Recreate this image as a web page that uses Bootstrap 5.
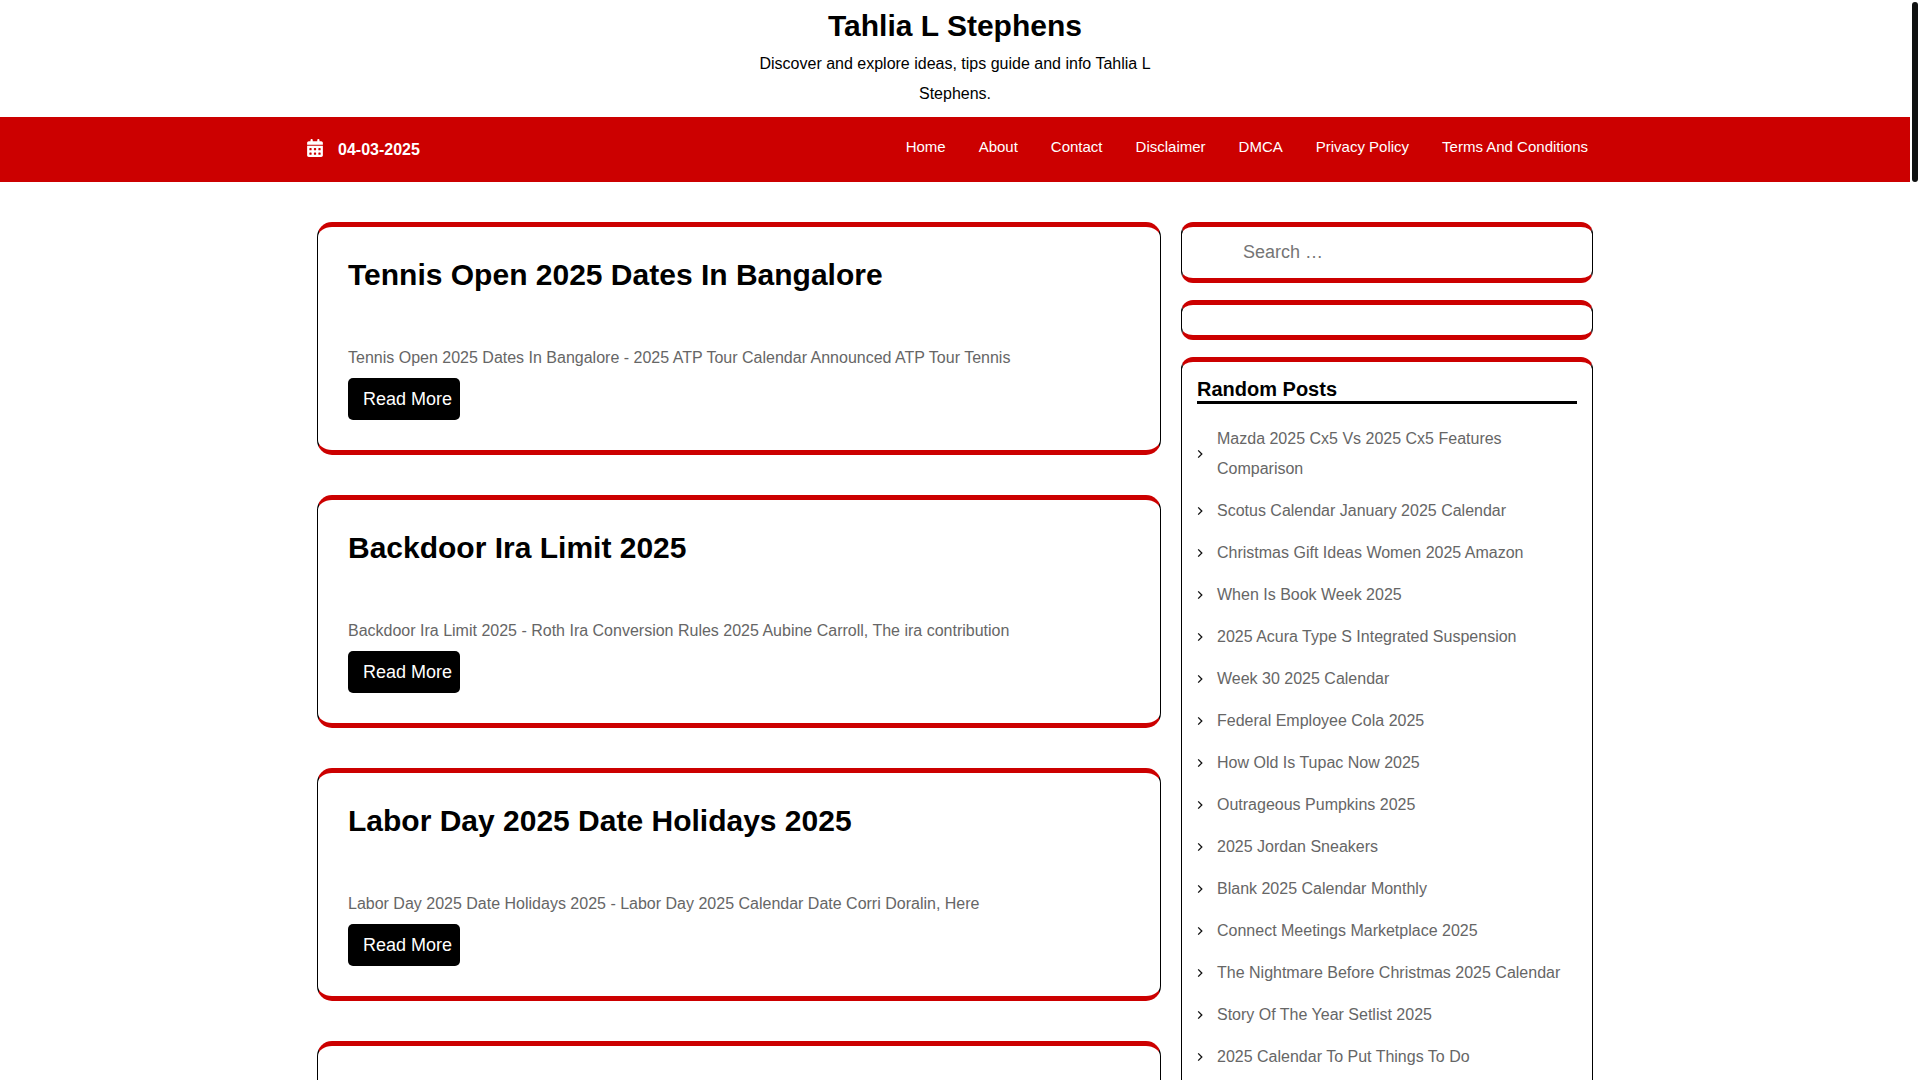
<!DOCTYPE html>
<html lang="en">
<head>
<meta charset="utf-8">
<meta name="viewport" content="width=device-width, initial-scale=1">
<title>Tahlia L Stephens</title>
<link href="https://cdn.jsdelivr.net/npm/bootstrap@5.3.0/dist/css/bootstrap.min.css" rel="stylesheet">
<style>
  body { font-family: "Liberation Sans", Arial, sans-serif; font-size: 16px; line-height: 30px; color: #000; background: #fff; height: 100vh; overflow: hidden; padding-right: 10px; }
  a { text-decoration: none; }
  .site-head { padding: 8px 0; }
  .site-title, .post-title { font-size: 30px; line-height: 36px; font-weight: 700; margin: 0; }
  .site-title a, .post-title a { color: #000; }
  .site-title { margin-bottom: 5px; }
  .topbar { background: #c00; color: #fff; height: 65px; }
  .date-icon { margin-bottom: 4px; }
  .date-text { font-weight: 700; margin-left: 15px; line-height: 65px; }
  .main-menu { gap: 3px; }
  .main-menu .nav-link { color: #fff; font-size: 15px; line-height: 30px; padding: 15px; }
  .content-row { --bs-gutter-x: 20px; margin: 40px 0 0; }
  .panel { border: 1px solid #000; border-width: 5px 1px; border-top-color: #c00; border-bottom-color: #c00; }
  .post { border-radius: 15px; padding: 30px; margin-bottom: 40px; }
  .post-title { margin-bottom: 50px; }
  .excerpt { color: #666; margin-bottom: 5px; }
  .read-more { display: block; width: fit-content; background: #000; color: #fff; font-size: 18px; line-height: 30px; padding: 6px 8px 6px 15px; border-radius: 5px; border: 0; }
  .side-box { border-radius: 12px; padding: 15px; margin-bottom: 17px; }
  .search-box { padding: 0 15px 0 61px; }
  .search-input { display: block; width: 100%; border: 0; outline: 0; font-size: 18px; line-height: 27px; padding: 12px 0; background: transparent; }
  .search-input::placeholder { color: #757575; opacity: 1; }
  .side-title { font-size: 20px; line-height: 24px; font-weight: 700; border-bottom: 3px solid #000; margin: 0 0 20px; }
  .posts li { display: flex; align-items: center; margin-bottom: 12px; }
  .posts svg { flex: none; width: 6px; height: 10px; margin-right: 14px; }
  .posts a { color: #666; }
  .scroll-thumb { position: fixed; top: 2px; right: 2px; width: 6px; height: 180px; border-radius: 3px; background: #0f1111; }
</style>
<script src="https://cdn.jsdelivr.net/npm/bootstrap@5.3.0/dist/js/bootstrap.bundle.min.js"></script>
</head>
<body>
<svg class="d-none" aria-hidden="true"><symbol id="angle" viewBox="0 0 6 10"><path d="M1.2 1.4 4.8 5 1.2 8.6" fill="none" stroke="#111" stroke-width="1.3"/></symbol></svg>

<header class="site-head text-center">
  <div class="container">
    <div class="row justify-content-center">
      <div class="col-4">
        <h1 class="site-title"><a href="#">Tahlia L Stephens</a></h1>
        <p class="mb-0">Discover and explore ideas, tips guide and info Tahlia L Stephens.</p>
      </div>
    </div>
  </div>
</header>

<div class="topbar">
  <div class="container d-flex justify-content-between align-items-start">
    <div class="d-flex align-items-center">
      <svg class="date-icon" width="16" height="18" viewBox="0 0 448 512" fill="#fff" aria-hidden="true"><path d="M128 0c17.700 0 32 14.300 32 32V64H288V32c0-17.700 14.300-32 32-32s32 14.300 32 32V64h48c26.500 0 48 21.500 48 48v48H0V112C0 85.500 21.500 64 48 64H96V32c0-17.700 14.300-32 32-32zM0 192H448V464c0 26.500-21.500 48-48 48H48c-26.500 0-48-21.500-48-48V192zm64 80v32c0 8.800 7.200 16 16 16h32c8.800 0 16-7.200 16-16V272c0-8.800-7.200-16-16-16H80c-8.800 0-16 7.200-16 16zm128 0v32c0 8.800 7.200 16 16 16h32c8.800 0 16-7.200 16-16V272c0-8.800-7.200-16-16-16H208c-8.800 0-16 7.200-16 16zm144-16c-8.800 0-16 7.200-16 16v32c0 8.800 7.200 16 16 16h32c8.800 0 16-7.200 16-16V272c0-8.800-7.200-16-16-16H336zM64 400v32c0 8.800 7.200 16 16 16h32c8.800 0 16-7.200 16-16V400c0-8.800-7.200-16-16-16H80c-8.800 0-16 7.200-16 16zm144-16c-8.800 0-16 7.200-16 16v32c0 8.800 7.200 16 16 16h32c8.800 0 16-7.200 16-16V400c0-8.800-7.200-16-16-16H208zm112 16v32c0 8.800 7.200 16 16 16h32c8.800 0 16-7.200 16-16V400c0-8.800-7.200-16-16-16H336c-8.800 0-16 7.200-16 16z"/></svg>
      <span class="date-text">04-03-2025</span>
    </div>
    <nav class="nav main-menu" aria-label="Main">
      <a class="nav-link" href="#">Home</a>
      <a class="nav-link" href="#">About</a>
      <a class="nav-link" href="#">Contact</a>
      <a class="nav-link" href="#">Disclaimer</a>
      <a class="nav-link" href="#">DMCA</a>
      <a class="nav-link" href="#">Privacy Policy</a>
      <a class="nav-link" href="#">Terms And Conditions</a>
    </nav>
  </div>
</div>

<div class="container">
  <div class="row content-row">
    <main class="col-8">
      <article class="panel post">
        <h2 class="post-title"><a href="#">Tennis Open 2025 Dates In Bangalore</a></h2>
        <p class="excerpt">Tennis Open 2025 Dates In Bangalore - 2025 ATP Tour Calendar Announced ATP Tour Tennis</p>
        <a class="read-more" href="#">Read More</a>
      </article>
      <article class="panel post">
        <h2 class="post-title"><a href="#">Backdoor Ira Limit 2025</a></h2>
        <p class="excerpt">Backdoor Ira Limit 2025 - Roth Ira Conversion Rules 2025 Aubine Carroll, The ira contribution</p>
        <a class="read-more" href="#">Read More</a>
      </article>
      <article class="panel post">
        <h2 class="post-title"><a href="#">Labor Day 2025 Date Holidays 2025</a></h2>
        <p class="excerpt">Labor Day 2025 Date Holidays 2025 - Labor Day 2025 Calendar Date Corri Doralin, Here</p>
        <a class="read-more" href="#">Read More</a>
      </article>
      <article class="panel post"></article>
    </main>
    <aside class="col-4">
      <form class="panel side-box search-box" role="search">
        <input class="search-input" type="search" aria-label="Search for" placeholder="Search …">
      </form>
      <div class="panel side-box"></div>
      <section class="panel side-box">
        <h3 class="side-title">Random Posts</h3>
        <ul class="posts list-unstyled mb-0">
          <li><svg><use href="#angle"/></svg><a href="#">Mazda 2025 Cx5 Vs 2025 Cx5 Features Comparison</a></li>
          <li><svg><use href="#angle"/></svg><a href="#">Scotus Calendar January 2025 Calendar</a></li>
          <li><svg><use href="#angle"/></svg><a href="#">Christmas Gift Ideas Women 2025 Amazon</a></li>
          <li><svg><use href="#angle"/></svg><a href="#">When Is Book Week 2025</a></li>
          <li><svg><use href="#angle"/></svg><a href="#">2025 Acura Type S Integrated Suspension</a></li>
          <li><svg><use href="#angle"/></svg><a href="#">Week 30 2025 Calendar</a></li>
          <li><svg><use href="#angle"/></svg><a href="#">Federal Employee Cola 2025</a></li>
          <li><svg><use href="#angle"/></svg><a href="#">How Old Is Tupac Now 2025</a></li>
          <li><svg><use href="#angle"/></svg><a href="#">Outrageous Pumpkins 2025</a></li>
          <li><svg><use href="#angle"/></svg><a href="#">2025 Jordan Sneakers</a></li>
          <li><svg><use href="#angle"/></svg><a href="#">Blank 2025 Calendar Monthly</a></li>
          <li><svg><use href="#angle"/></svg><a href="#">Connect Meetings Marketplace 2025</a></li>
          <li><svg><use href="#angle"/></svg><a href="#">The Nightmare Before Christmas 2025 Calendar</a></li>
          <li><svg><use href="#angle"/></svg><a href="#">Story Of The Year Setlist 2025</a></li>
          <li><svg><use href="#angle"/></svg><a href="#">2025 Calendar To Put Things To Do</a></li>
        </ul>
      </section>
    </aside>
  </div>
</div>
<div class="scroll-thumb" aria-hidden="true"></div>
</body>
</html>
